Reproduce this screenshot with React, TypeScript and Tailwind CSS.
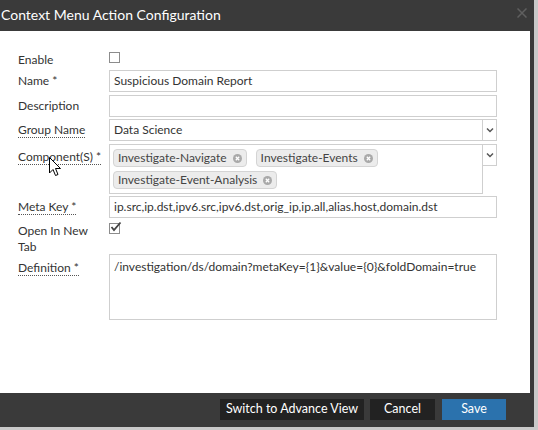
import React from 'react';

const font = { fontFamily: 'Lato, "Open Sans", sans-serif' };

function TagClose() {
  return (
    <svg width="9" height="9" viewBox="0 0 9 9" className="ml-[6px]">
      <circle cx="4.5" cy="4.5" r="4.5" fill="#a9a9a9" />
      <path d="M2.8 2.8 L6.2 6.2 M6.2 2.8 L2.8 6.2" stroke="#fff" strokeWidth="1.3" />
    </svg>
  );
}

function Tag({ label }: { label: string }) {
  return (
    <span className="flex items-center h-[18px] px-[4px] bg-[#ececec] border border-[#d4d4d4] rounded-[4px] text-[#444]">
      {label}
      <TagClose />
    </span>
  );
}

function Chevron() {
  return (
    <svg width="8" height="6" viewBox="0 0 8 6">
      <path d="M1 1.5 L4 4.5 L7 1.5" stroke="#555" strokeWidth="1.5" fill="none" />
    </svg>
  );
}

function Label({ children, dotted }: { children: React.ReactNode; dotted?: boolean }) {
  return dotted ? (
    <span className="border-b border-dotted border-[#555]">{children}</span>
  ) : (
    <span>{children}</span>
  );
}

export default function App() {
  return (
    <div className="w-[538px] h-[430px] bg-[#c9c9c9] relative overflow-hidden text-[12px] text-[#333] whitespace-nowrap" style={font}>
      <div className="w-[534px] h-[427px] bg-[#3a3a3a] flex flex-col">
        {/* title */}
        <div className="h-[31px] flex items-center justify-between pr-[7px]">
          <span className="text-white text-[14px] ml-[1px] -mt-[2px]">Context Menu Action Configuration</span>
          <svg width="10" height="10" viewBox="0 0 10 10" className="-mt-[5px]">
            <path d="M0.5 0.5 L9.5 9.5 M9.5 0.5 L0.5 9.5" stroke="#5f5f5f" strokeWidth="1.5" />
          </svg>
        </div>

        {/* body */}
        <div className="flex-1 bg-white mr-[4px] pl-[18px] pt-[20px]">
          {/* Enable */}
          <div className="flex h-[18px]">
            <div className="w-[91px] leading-[17px]">Enable</div>
            <div className="w-[11px] h-[11px] border border-[#8c8c8c] mt-[1px]" />
          </div>

          {/* Name */}
          <div className="flex mt-[1px]">
            <div className="w-[91px] leading-[22px]">Name *</div>
            <div className="w-[388px] h-[22px] border border-[#cfcfcf] px-[4px] leading-[20px]">Suspicious Domain Report</div>
          </div>

          {/* Description */}
          <div className="flex mt-[3px]">
            <div className="w-[91px] leading-[22px]">Description</div>
            <div className="w-[388px] h-[22px] border border-[#cfcfcf]" />
          </div>

          {/* Group Name */}
          <div className="flex mt-[2px]">
            <div className="w-[91px] leading-[22px]">
              <Label dotted>Group Name</Label>
            </div>
            <div className="w-[388px] h-[22px] border border-[#cfcfcf] flex">
              <div className="flex-1 px-[4px] leading-[20px]">Data Science</div>
              <div className="w-[14px] border-l border-[#cfcfcf] flex items-center justify-center">
                <Chevron />
              </div>
            </div>
          </div>

          {/* Components */}
          <div className="flex mt-[3px]">
            <div className="w-[91px] leading-[22px] pt-[2px]">
              <Label dotted>Component(S) *</Label>
            </div>
            <div className="w-[374px] h-[50px] border border-[#cfcfcf] px-[3px] pt-[4px] flex flex-wrap gap-x-[9px] gap-y-[4px] content-start">
              <Tag label="Investigate-Navigate" />
              <Tag label="Investigate-Events" />
              <Tag label="Investigate-Event-Analysis" />
            </div>
            <div className="w-[14px] h-[22px] border border-[#cfcfcf] border-l-0 flex items-center justify-center">
              <Chevron />
            </div>
          </div>

          {/* Meta Key */}
          <div className="flex mt-[2px]">
            <div className="w-[91px] leading-[22px]">
              <Label dotted>Meta Key *</Label>
            </div>
            <div className="w-[388px] h-[22px] border border-[#cfcfcf] px-[4px] leading-[20px]">
              ip.src,ip.dst,ipv6.src,ipv6.dst,orig_ip,ip.all,alias.host,domain.dst
            </div>
          </div>

          {/* Open in new tab */}
          <div className="flex mt-[4px]">
            <div className="w-[91px] leading-[16px] pt-[1px]">
              Open In New
              <br />
              Tab
            </div>
            <div className="relative w-[11px] h-[11px] border border-[#8c8c8c] mt-[1px]">
              <svg width="12" height="12" viewBox="0 0 12 12" className="absolute -top-[3px] left-[0px]">
                <path d="M1.5 6 L4 9 L10.5 1.5" stroke="#444" strokeWidth="1.8" fill="none" />
              </svg>
            </div>
          </div>

          {/* Definition */}
          <div className="flex mt-[-1px]">
            <div className="w-[91px] leading-[16px] pt-[6px]">
              <Label dotted>Definition *</Label>
            </div>
            <div className="w-[388px] h-[66px] border border-[#cfcfcf] px-[4px] pt-[2px] leading-[20px]">
              /investigation/ds/domain?metaKey={'{1}'}&amp;value={'{0}'}&amp;foldDomain=true
            </div>
          </div>
        </div>

        {/* footer */}
        <div className="h-[34px] flex items-start justify-end pt-[6px] pr-[28px] gap-[6px] text-white text-[12.5px]">
          <button className="h-[21px] w-[144px] bg-[#222222]">Switch to Advance View</button>
          <button className="h-[21px] w-[65px] bg-[#222222]">Cancel</button>
          <button className="h-[21px] w-[64px] bg-[#2b72ad] ml-[1px]">Save</button>
        </div>
      </div>

      {/* mouse cursor */}
      <svg width="13" height="21" viewBox="0 0 13 21" className="absolute left-[49px] top-[157px]">
        <path d="M0.5 0.5 L0.5 16 L4 12.5 L6.5 18.5 L9 17.5 L6.5 11.5 L11.5 11.5 Z" fill="#fff" stroke="#000" strokeWidth="1" strokeLinejoin="round" />
      </svg>
    </div>
  );
}
